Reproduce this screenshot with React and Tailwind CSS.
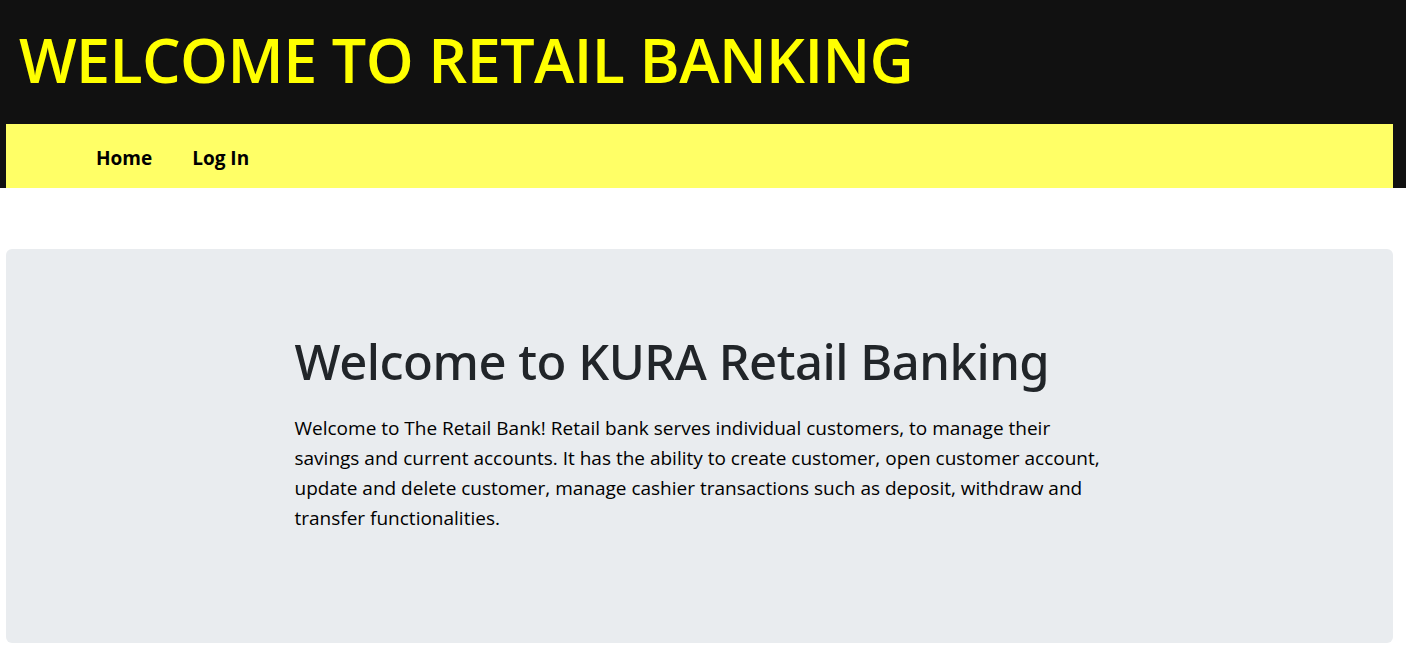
export default function App() {
  const font = { fontFamily: '"Open Sans", "Noto Sans", sans-serif' };
  return (
    <div className="w-[1406px] bg-white" style={font}>
      <header className="bg-[#111111] pl-[6px] pr-[13px]">
        <div className="h-[124px] flex items-center pl-[13px] pb-[6px]">
          <h1 className="text-[#ffff00] text-[61px] font-semibold leading-none tracking-[-0.6px]">WELCOME TO RETAIL BANKING</h1>
        </div>
        <nav className="h-[64px] bg-[#ffff66] flex items-center pl-[90px] pt-[4px] gap-[40px]">
          <a className="text-black text-[19px] font-bold">Home</a>
          <a className="text-black text-[19px] font-bold">Log In</a>
        </nav>
      </header>
      <main className="pt-[61px] pb-[10px] pl-[6px] pr-[13px]">
        <section className="h-[394px] bg-[#e9ecef] rounded-[6px] flex justify-center">
          <div className="w-[810px] pt-[83px]">
            <h2 className="text-[#212529] text-[49px] font-medium leading-[1.2] tracking-[-0.5px]" style={{ fontFamily: '"Noto Sans", "Open Sans", sans-serif' }}>Welcome to KURA Retail Banking</h2>
            <p className="mt-[22px] text-black text-[19px] leading-[30px]">
              Welcome to The Retail Bank! Retail bank serves individual customers, to manage their<br />
              savings and current accounts. It has the ability to create customer, open customer account,<br />
              update and delete customer, manage cashier transactions such as deposit, withdraw and<br />
              transfer functionalities.
            </p>
          </div>
        </section>
      </main>
    </div>
  );
}
